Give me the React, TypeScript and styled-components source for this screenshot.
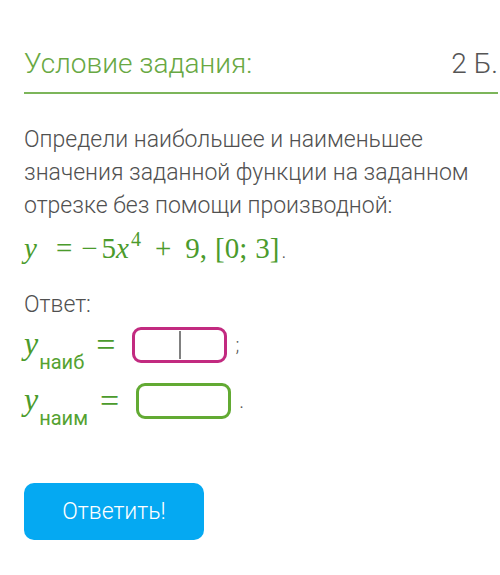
import { createGlobalStyle, styled } from 'styled-components'

const Global = createGlobalStyle`
  html, body {
    margin: 0;
    padding: 0;
    background: #fff;
  }
  body {
    font-family: Roboto, 'Noto Sans', sans-serif;
    color: #555;
  }
`

export default function App() {
  return (
    <>
      <Global />
      <Page>
        <Header>
          <Title>Условие задания:</Title>
          <Score>2 Б.</Score>
        </Header>
        <Text>
          Определи наибольшее и наименьшее значения заданной функции на заданном отрезке без помощи
          производной:
        </Text>
        <Formula>
          <I>y</I>
          <Rel>=</Rel>
          <Minus>−</Minus>
          <span>5</span>
          <I>x</I>
          <Sup>4</Sup>
          <Bin>+</Bin>
          <span>9</span>
          <span>,</span>
          <Gap />
          <span>[0;</span>
          <Gap />
          <span>3]</span>
          <Dot>.</Dot>
        </Formula>
        <Text $top={22}>Ответ:</Text>
        <Answers>
          <Row>
            <VarName>
              <I>y</I>
              <Sub>наиб</Sub>
            </VarName>
            <Equals>=</Equals>
            <Field tone="magenta">
              <Caret />
            </Field>
            <Punct>;</Punct>
          </Row>
          <Row>
            <VarName>
              <I>y</I>
              <Sub>наим</Sub>
            </VarName>
            <Equals>=</Equals>
            <Field tone="green" />
            <Punct>.</Punct>
          </Row>
        </Answers>
        <SubmitButton>Ответить!</SubmitButton>
      </Page>
    </>
  )
}

const Page = styled.div`
  padding: 46px 2px 40px 24px;
`

const Header = styled.div`
  display: flex;
  justify-content: space-between;
  align-items: baseline;
  padding-bottom: 10px;
  border-bottom: 2px solid #7cb55a;
`

const Title = styled.h2`
  margin: 0;
  font-size: 28px;
  line-height: 36px;
  font-weight: 300;
  color: #68a843;
`

const Score = styled.span`
  font-size: 28px;
  line-height: 36px;
  font-weight: 300;
  color: #555;
`

const Text = styled.p<{ $top?: number }>`
  margin: ${p => p.$top ?? 29}px 0 0;
  font-size: 23px;
  line-height: 33px;
  font-weight: 300;
  color: #505050;
`

const Formula = styled.div`
  margin-top: 8px;
  height: 36px;
  font-family: 'Liberation Serif', 'DejaVu Serif', serif;
  font-size: 29px;
  line-height: 36px;
  color: #4b9b2c;
  white-space: nowrap;
`

const I = styled.i`
  font-style: italic;
`

const Rel = styled.span`
  margin: 0 9px 0 19px;
`

const Minus = styled.span`
  margin-right: 4px;
`

const Bin = styled.span`
  margin: 0 14px;
`

const Sup = styled.sup`
  font-size: 20px;
  vertical-align: 12px;
  line-height: 0;
  margin-left: 2px;
`

const Gap = styled.span`
  display: inline-block;
  width: 8px;
`

const Dot = styled.span`
  font-family: Roboto, sans-serif;
  font-weight: 300;
  color: #555;
  font-size: 20px;
  margin-left: 2px;
`

const Answers = styled.div`
  margin-top: 6px;
  display: flex;
  flex-direction: column;
  gap: 20px;
`

const Row = styled.div`
  display: flex;
  align-items: center;
  height: 36px;
`

const VarName = styled.span`
  padding-top: 9px;
  font-family: 'Liberation Serif', serif;
  font-size: 32px;
  line-height: 30px;
  color: #4b9b2c;
  white-space: nowrap;
`

const Sub = styled.span`
  font-family: Roboto, sans-serif;
  font-size: 20px;
  line-height: 20px;
  font-weight: 400;
  vertical-align: -15px;
  margin-left: 1px;
  color: #54a231;
`

const Equals = styled.span`
  font-family: 'Liberation Serif', serif;
  font-size: 34px;
  line-height: 34px;
  color: #4b9b2c;
  margin: 0 17px 0 12px;
`

type FieldProps = { tone: 'magenta' | 'green' }

const Field = styled.div<FieldProps>`
  box-sizing: border-box;
  width: 95px;
  height: 36px;
  border: 3px solid ${p => (p.tone === 'magenta' ? '#c22a80' : '#62aa33')};
  border-radius: 9px;
  display: flex;
  align-items: center;
  justify-content: center;
`

const Caret = styled.span`
  width: 2px;
  height: 28px;
  background: #808080;
`

const Punct = styled.span`
  margin-left: 8px;
  font-size: 20px;
  font-weight: 300;
  color: #555;
`

const SubmitButton = styled.button`
  margin-top: 64px;
  width: 180px;
  height: 57px;
  border: none;
  border-radius: 10px;
  background: #05a9f2;
  color: #fff;
  font-family: Roboto, sans-serif;
  font-size: 23px;
  font-weight: 300;
  cursor: pointer;
`
